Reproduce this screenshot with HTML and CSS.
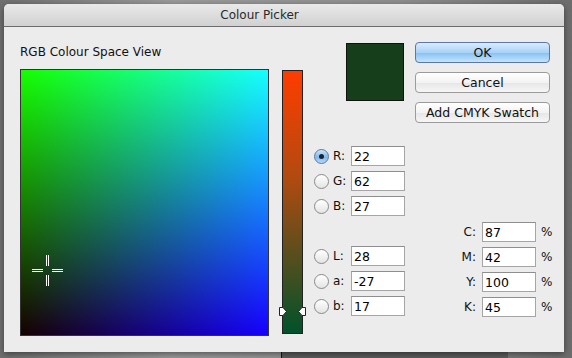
FILE: index.html
```html
<!DOCTYPE html>
<html lang="en">
<head>
  <meta charset="UTF-8">
  <title>Colour Picker</title>
  <link rel="stylesheet" href="styles.css">
</head>
<body>

  <!-- Dialog window -->
  <div class="window">
    <div class="titlebar"><span class="title">Colour Picker</span></div>

    <div class="content">

      <!-- Colour field -->
      <div class="field-col">
        <div class="field-label">RGB Colour Space View</div>
        <div class="field">
          <svg class="crosshair" width="247" height="265" viewBox="0 0 247 265">
            <rect x="25" y="185" width="1" height="11" fill="#fff"/>
            <rect x="27" y="185" width="1" height="11" fill="#fff"/>
            <rect x="25" y="205" width="1" height="11" fill="#fff"/>
            <rect x="27" y="205" width="1" height="11" fill="#fff"/>
            <rect x="11" y="199" width="11" height="1" fill="#fff"/>
            <rect x="11" y="201" width="11" height="1" fill="#fff"/>
            <rect x="31" y="199" width="11" height="1" fill="#fff"/>
            <rect x="31" y="201" width="11" height="1" fill="#fff"/>
          </svg>
        </div>
      </div>

      <!-- Red channel slider -->
      <div class="slider">
        <svg class="slider-handle" width="27" height="11" viewBox="0 0 27 11">
          <path d="M0.5 1.5 H4 L7.5 5.5 L4 9.5 H0.5 Z" fill="#fff" stroke="#222" stroke-width="1"/>
          <path d="M26.5 1.5 H23 L19.5 5.5 L23 9.5 H26.5 Z" fill="#fff" stroke="#222" stroke-width="1"/>
        </svg>
      </div>

      <!-- Controls -->
      <div class="panel">
        <div class="panel-top">
          <div class="swatch"></div>
          <div class="buttons">
            <button class="btn btn-default">OK</button>
            <button class="btn">Cancel</button>
            <button class="btn">Add CMYK Swatch</button>
          </div>
        </div>

        <div class="panel-bottom">
          <div class="channels">
            <div class="group">
              <div class="row"><span class="radio checked"></span><span class="ch-label">R:</span><input class="num" type="text" value="22"></div>
              <div class="row"><span class="radio"></span><span class="ch-label">G:</span><input class="num" type="text" value="62"></div>
              <div class="row"><span class="radio"></span><span class="ch-label">B:</span><input class="num" type="text" value="27"></div>
            </div>
            <div class="group">
              <div class="row"><span class="radio"></span><span class="ch-label">L:</span><input class="num" type="text" value="28"></div>
              <div class="row"><span class="radio"></span><span class="ch-label">a:</span><input class="num" type="text" value="-27"></div>
              <div class="row"><span class="radio"></span><span class="ch-label">b:</span><input class="num" type="text" value="17"></div>
            </div>
          </div>

          <div class="cmyk">
            <div class="row"><span class="cmyk-label">C:</span><input class="num" type="text" value="87"><span class="pct">%</span></div>
            <div class="row"><span class="cmyk-label">M:</span><input class="num" type="text" value="42"><span class="pct">%</span></div>
            <div class="row"><span class="cmyk-label">Y:</span><input class="num" type="text" value="100"><span class="pct">%</span></div>
            <div class="row"><span class="cmyk-label">K:</span><input class="num" type="text" value="45"><span class="pct">%</span></div>
          </div>
        </div>
      </div>

    </div>
  </div>

  <div class="backdrop"></div>

</body>
</html>
```

FILE: styles.css
```css
body {
  margin: 0;
  height: 358px;
  overflow: hidden;
  font-family: "DejaVu Sans", sans-serif;
  font-size: 12px;
  color: #111;
  background: linear-gradient(to right, #6f6f6f, #9a9a9a 30%, #8e8e8e 70%, #6c6c6c);
}
.window {
  margin: 4px 0 0 4px;
  width: 560px;
  height: 348px;
  background-color: #ececec;
  border-radius: 5px 5px 0 0;
  box-shadow: 0 2px 6px rgba(0, 0, 0, 0.45);
}
.titlebar {
  height: 22px;
  line-height: 22px;
  text-align: center;
  padding-right: 49px;
  border-bottom: 1px solid #6b6b6b;
  border-radius: 5px 5px 0 0;
  background: linear-gradient(#e9e9e9, #d1d1d1);
  color: #2a2a2a;
}
.content {
  display: flex;
  padding: 15px 0 0 16px;
}
.field-col {
  width: 249px;
}
.field-label {
  height: 20px;
  line-height: 20px;
}
.field {
  position: relative;
  margin-top: 7px;
  width: 249px;
  height: 267px;
  box-sizing: border-box;
  border: 1px solid #333;
  background-image:
    linear-gradient(to top, rgb(0, 0, 0), rgb(0, 255, 0)),
    linear-gradient(to right, rgb(22, 0, 0), rgb(22, 0, 255));
  background-blend-mode: screen;
}
.crosshair {
  position: absolute;
  left: 0;
  top: 0;
}
.slider {
  position: relative;
  margin: 28px 0 0 13px;
  width: 21px;
  height: 264px;
  box-sizing: border-box;
  border: 1px solid #222;
  background: linear-gradient(#ff3c00, #b34a10 40%, #00522a);
}
.slider-handle {
  position: absolute;
  left: -4px;
  top: 235px;
}
.panel {
  display: flex;
  flex-direction: column;
}
.panel-top {
  display: flex;
}
.swatch {
  margin: 1px 0 0 43px;
  width: 58px;
  height: 58px;
  box-sizing: border-box;
  border: 1px solid #111;
  background-color: rgb(22, 62, 27);
}
.buttons {
  display: flex;
  flex-direction: column;
  gap: 9px;
  margin-left: 11px;
  width: 135px;
}
.btn {
  height: 21px;
  padding: 0;
  font-family: "DejaVu Sans", sans-serif;
  font-size: 12.5px;
  color: #111;
  border: 1px solid #9b9b9b;
  border-radius: 4px;
  background: linear-gradient(#ffffff, #f3f3f3 50%, #e6e6e6 51%, #f6f6f6);
}
.btn-default {
  border-color: #5e76a6;
  background: linear-gradient(#d9ecfc, #a9d2f7 50%, #86c0f2 51%, #c4e4fd);
}
.panel-bottom {
  display: flex;
  margin-top: 23px;
}
.channels {
  display: flex;
  flex-direction: column;
  gap: 30px;
  margin-left: 11px;
}
.group, .cmyk {
  display: flex;
  flex-direction: column;
  gap: 5px;
}
.row {
  display: flex;
  align-items: center;
  height: 20px;
}
.radio {
  position: relative;
  width: 15px;
  height: 15px;
  margin-right: 4px;
  box-sizing: border-box;
  border: 1px solid #8a8a8a;
  border-radius: 50%;
  background: linear-gradient(#ffffff, #e4e4e4);
}
.radio.checked {
  border-color: #5a78a8;
  background: linear-gradient(#cfe6fb, #80b8ec 55%, #b6dafa);
}
.radio.checked::after {
  content: "";
  position: absolute;
  left: 4px;
  top: 4px;
  width: 5px;
  height: 5px;
  border-radius: 50%;
  background-color: #1b2333;
}
.ch-label {
  width: 18px;
}
.num {
  width: 54px;
  height: 20px;
  box-sizing: border-box;
  padding: 0 0 0 2px;
  margin: 0;
  border: 1px solid #a5a5a5;
  border-top-color: #8e8e8e;
  background-color: #fff;
  font-family: "DejaVu Sans", sans-serif;
  font-size: 12.5px;
  color: #000;
}
.cmyk {
  margin: 76px 0 0 35px;
}
.cmyk-label {
  width: 36px;
  margin-right: 6px;
  text-align: right;
}
.pct {
  margin-left: 5px;
}
.backdrop {
  margin-left: 281px;
  width: 226px;
  height: 6px;
  background: linear-gradient(#3c3c3c, #5a5a5a);
  border-left: 1px solid #111;
}
```
